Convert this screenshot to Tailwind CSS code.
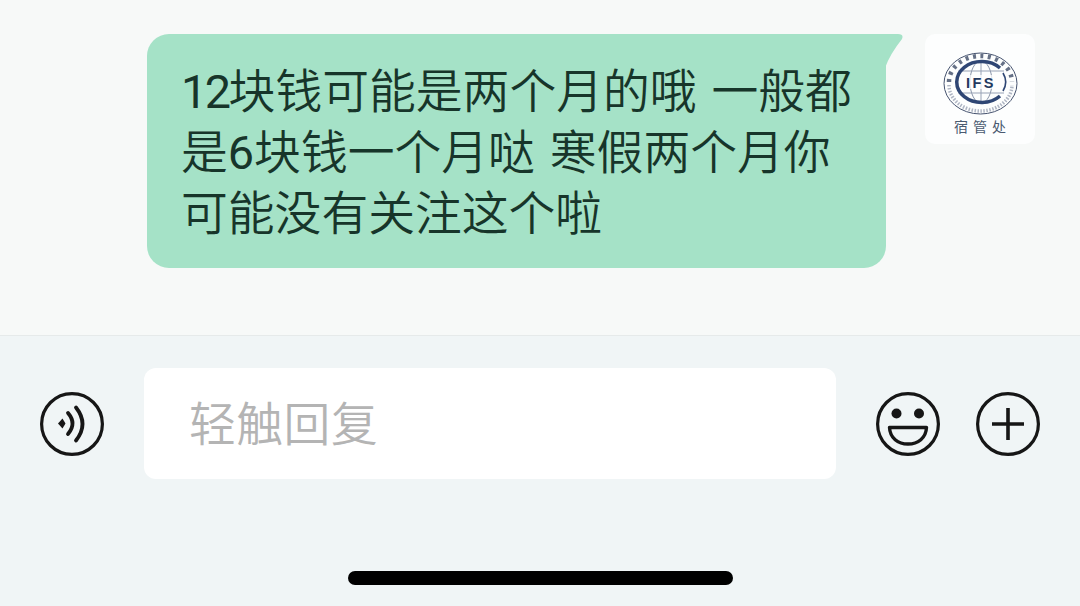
<!DOCTYPE html>
<html lang="zh-CN">
  <head>
    <meta charset="UTF-8" />
    <meta name="viewport" content="width=device-width, initial-scale=1.0" />
    <title>Chat</title>
    <script src="https://cdn.jsdelivr.net/npm/@tailwindcss/browser@4"></script>
  </head>
  <body class="w-[1080px] h-[606px] overflow-hidden bg-[#f7f9f8] font-['Roboto','Noto_Sans_CJK_SC',sans-serif]">
    <div class="flex flex-col h-[606px]">
      <!-- message area -->
      <main class="h-[335px] pt-[34px] pl-[147px] pr-[45px] flex items-start">
        <div class="relative w-[739px] h-[234px] bg-[#a5e2c7] rounded-[22px] rounded-tr-none pl-[34px] pt-[28px] text-[#17352a] text-[46.8px] leading-[61px] whitespace-nowrap font-[350] [word-spacing:3.5px]">
          <svg class="absolute left-[738px] top-0 w-[18px] h-[36px]" viewBox="0 0 18 36">
            <path d="M0 0 H13 Q19 0 17 5 Q5 20 0 34 Z" fill="#a5e2c7" />
          </svg>
          <p><span class="font-normal tracking-[-2.5px]">12</span>块钱可能是两个月的哦 一般都</p>
          <p>是<span class="font-normal">6</span>块钱一个月哒 寒假两个月你</p>
          <p>可能没有关注这个啦</p>
        </div>
        <!-- avatar -->
        <div class="ml-[39px] w-[110px] h-[110px] shrink-0 bg-[#fdfefe] rounded-[10px] flex flex-col items-center pt-[18px]">
          <svg class="w-[75px] h-[63px] ml-[1px]" viewBox="0 0 75 63" fill="none">
            <ellipse cx="37.5" cy="31.5" rx="36.5" ry="30.5" stroke="#46536f" stroke-width="1" />
            <path d="M6 30 A31.5 26 0 0 1 69 30" stroke="#3f4c68" stroke-width="4.5" stroke-dasharray="3 4.5" opacity="0.8" />
            <path d="M6 33 A31.5 26 0 0 0 69 33" stroke="#7b869c" stroke-width="3.5" stroke-dasharray="1.5 1.5" opacity="0.6" />
            <ellipse cx="38" cy="30" rx="11" ry="21" stroke="#8a95aa" stroke-width="1" />
            <path d="M38 9 V51 M15 19 H61 M15 41 H61" stroke="#98a2b5" stroke-width="1" />
            <rect x="19" y="23" width="42" height="14" fill="#fdfefe" opacity="0.75" />
            <path d="M57 16 A25 20.5 0 1 0 57 44" stroke="#2f4674" stroke-width="3.5" />
            <path d="M60 21 A24 20 0 0 1 60 39" stroke="#2f4674" stroke-width="1.6" />
            <text x="38" y="36" text-anchor="middle" font-family="Liberation Sans, sans-serif" font-size="14.5" font-weight="700" letter-spacing="2.5" fill="#24395f">IFS</text>
          </svg>
          <p class="mt-[3px] text-[14px] leading-[16px] tracking-[5px] pl-[5px] text-[#4a5a70] font-['Noto_Sans_CJK_SC',sans-serif]">宿管处</p>
        </div>
      </main>

      <!-- reply bar -->
      <footer class="flex-1 bg-[#f0f5f6] border-t border-[#e6eaea] relative">
        <div class="flex items-start pt-[32px] pl-[40px]">
          <svg class="w-[64px] h-[64px] mt-[24px] shrink-0" viewBox="0 0 64 64" fill="none" stroke="#161616">
            <circle cx="32" cy="32" r="30.4" stroke-width="3.2" />
            <path d="M18 31.5 L22.5 26.5 L25.5 31.5 L22.5 36.5 Z" fill="#161616" stroke="none" />
            <path d="M28 21 Q37 31.5 28 42" stroke-width="3.8" stroke-linecap="round" />
            <path d="M36 15.5 Q49 32 36 48.5" stroke-width="3.8" stroke-linecap="round" />
          </svg>
          <div class="ml-[40px] w-[692px] h-[111px] bg-white rounded-[12px] pl-[45px] pt-[4px] flex items-center text-[46.8px] tracking-[0.5px] font-[350] text-[#b4b4b4]">
            轻触回复
          </div>
          <svg class="ml-[40px] w-[64px] h-[64px] mt-[24px] shrink-0" viewBox="0 0 64 64" fill="none" stroke="#161616">
            <circle cx="32" cy="32" r="30.4" stroke-width="3.2" />
            <circle cx="20.5" cy="21.5" r="5" fill="#161616" stroke="none" />
            <circle cx="43" cy="21.5" r="5" fill="#161616" stroke="none" />
            <path d="M13.5 35.5 H50.5 C50 46 42 52 32 52 C22 52 14 46 13.5 35.5 Z" stroke-width="3.4" stroke-linejoin="round" />
          </svg>
          <svg class="ml-[36px] w-[64px] h-[64px] mt-[24px] shrink-0" viewBox="0 0 64 64" fill="none" stroke="#161616">
            <circle cx="32" cy="32" r="30.4" stroke-width="3.2" />
            <path d="M16 32 H48 M32 16 V48" stroke-width="3.6" />
          </svg>
        </div>
        <div class="absolute left-[348px] top-[235px] w-[385px] h-[14px] rounded-full bg-black"></div>
      </footer>
    </div>
  </body>
</html>
